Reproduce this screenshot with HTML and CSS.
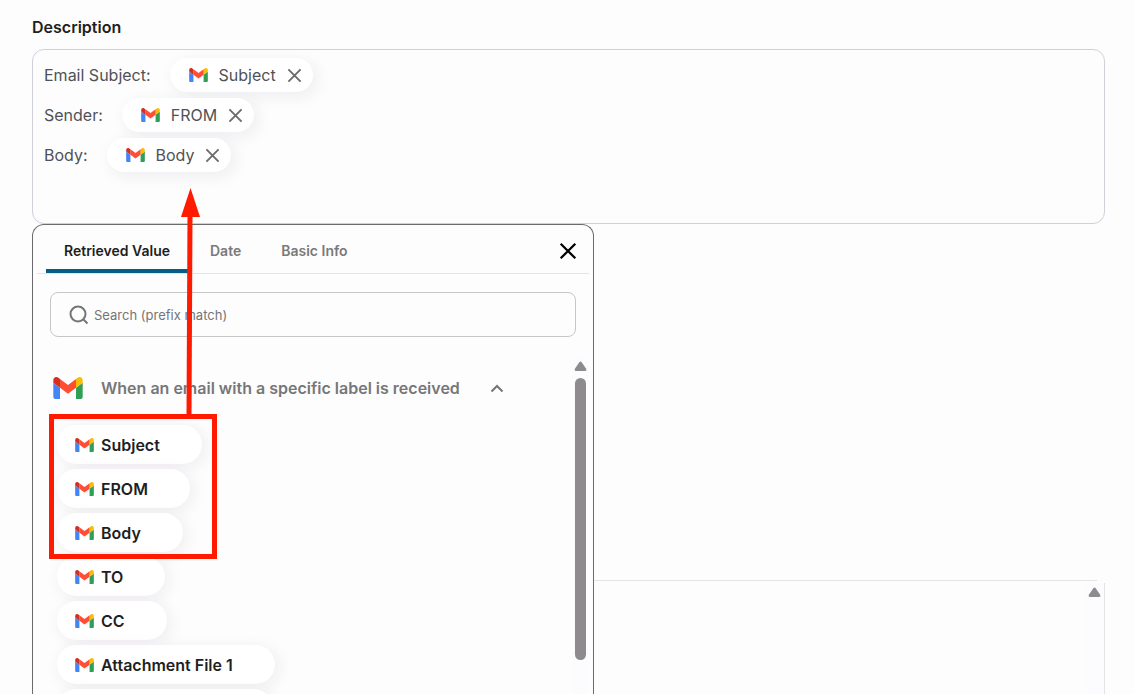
FILE: index.html
```html
<!DOCTYPE html>
<html lang="en">
<head>
  <meta charset="UTF-8" />
  <meta name="viewport" content="width=device-width, initial-scale=1.0"/>
  <title>Description</title>
  <link rel="stylesheet" href="styles.css">
</head>
<body>
  <!-- shared icons -->
  <svg class="sprite" aria-hidden="true">
    <symbol id="gmail" viewBox="52 42 88 66">
      <path fill="#4285f4" d="M58 108h14V74L52 59v43c0 3.32 2.69 6 6 6"/>
      <path fill="#2f9e57" d="M120 108h14c3.32 0 6-2.69 6-6V59l-20 15"/>
      <path fill="#fbbc04" d="M120 48v26l20-15v-8c0-7.42-8.47-11.65-14.4-7.2"/>
      <path fill="#ff4e33" d="M72 74V48l24 18 24-18v26L96 92"/>
      <path fill="#d5301f" d="M52 51v8l20 15V48l-5.6-4.2c-5.94-4.45-14.4-.22-14.4 7.2"/>
    </symbol>
    <symbol id="cross" viewBox="0 0 16 16">
      <path d="M1.5 1.5l13 13M14.5 1.5l-13 13" fill="none" stroke="currentColor"/>
    </symbol>
    <symbol id="up" viewBox="0 0 12 10">
      <path d="M5 1Q6 0 7 1L11.5 7.500Q12.500 10 10.500 10H1.500Q-.5 10 .5 7.500Z" fill="currentColor"/>
    </symbol>
  </svg>

  <main class="page">
    <h1 class="field-label" id="desc-label">Description</h1>

    <div class="field">
      <div class="editor" role="textbox" aria-multiline="true" aria-labelledby="desc-label" tabindex="0">
        <div class="line">
          <span>Email Subject:</span>
          <span class="token"><svg class="mail"><use href="#gmail"/></svg>Subject<button class="remove" type="button" aria-label="Remove Subject"><svg><use href="#cross"/></svg></button></span>
        </div>
        <div class="line">
          <span>Sender:</span>
          <span class="token"><svg class="mail"><use href="#gmail"/></svg>FROM<button class="remove" type="button" aria-label="Remove FROM"><svg><use href="#cross"/></svg></button></span>
        </div>
        <div class="line">
          <span>Body:</span>
          <span class="token"><svg class="mail"><use href="#gmail"/></svg>Body<button class="remove" type="button" aria-label="Remove Body"><svg><use href="#cross"/></svg></button></span>
        </div>
      </div>

      <div class="picker">
        <div class="picker-head">
          <div class="tabs" role="tablist">
            <button class="tab active" type="button" role="tab" aria-selected="true">Retrieved Value</button>
            <button class="tab" type="button" role="tab" aria-selected="false">Date</button>
            <button class="tab" type="button" role="tab" aria-selected="false">Basic Info</button>
          </div>
          <button class="close" type="button" aria-label="Close"><svg><use href="#cross"/></svg></button>
        </div>

        <div class="search">
          <svg viewBox="0 0 20 20"><circle cx="9" cy="9" r="7.500"/><path d="M14.500 14.500l4 4"/></svg>
          <input type="text" placeholder="Search (prefix match)" aria-label="Search">
        </div>

        <div class="picker-body">
          <div class="groups">
            <button class="group-title" type="button" aria-expanded="true">
              <svg class="mail-large"><use href="#gmail"/></svg>
              <span>When an email with a specific label is received</span>
              <svg class="chevron" viewBox="0 0 14 9"><path d="M1.500 7.500L7 2l5.500 5.500"/></svg>
            </button>
            <div class="values">
              <button class="value" type="button"><svg class="mail"><use href="#gmail"/></svg>Subject</button>
              <button class="value" type="button"><svg class="mail"><use href="#gmail"/></svg>FROM</button>
              <button class="value" type="button"><svg class="mail"><use href="#gmail"/></svg>Body</button>
              <button class="value" type="button"><svg class="mail"><use href="#gmail"/></svg>TO</button>
              <button class="value" type="button"><svg class="mail"><use href="#gmail"/></svg>CC</button>
              <button class="value" type="button"><svg class="mail"><use href="#gmail"/></svg>Attachment File 1</button>
              <button class="value next" type="button"><svg class="mail"><use href="#gmail"/></svg></button>
            </div>
          </div>
          <div class="scrollbar">
            <svg class="scroll-up"><use href="#up"/></svg>
            <div class="thumb"></div>
          </div>
        </div>
      </div>
    </div>

    <section class="results">
      <div class="scrollbar">
        <svg class="scroll-up"><use href="#up"/></svg>
      </div>
    </section>
  </main>

  <!-- red callout over the picker -->
  <svg class="callout" aria-hidden="true">
    <path d="M190.500 188L200 217H181Z" fill="#ff1a00"/>
    <path d="M190 215L189 416" stroke="#ff1a00" stroke-width="5"/>
    <rect x="51.500" y="416.500" width="163" height="140" fill="none" stroke="#ff1a00" stroke-width="5"/>
  </svg>
</body>
</html>
```
FILE: styles.css
```css
* {
  box-sizing: border-box;
}
body {
  margin: 0;
  height: 100vh;
  overflow: hidden;
  position: relative;
  background: #fdfdfd;
  color: #1f1f1f;
  font-family: Inter, "Liberation Sans", sans-serif;
  font-size: 16px;
}
button,
input {
  font: inherit;
  color: inherit;
  background: none;
  border: none;
  padding: 0;
}
button {
  cursor: pointer;
}
.sprite {
  display: none;
}
.page {
  height: 100%;
  display: flex;
  flex-direction: column;
  padding: 17px 30px 0 32px;
}
.field-label {
  margin: 0 0 12px;
  font-size: 16px;
  font-weight: 600;
  line-height: 20px;
}

/* Description editor */
.field {
  position: relative;
}
.editor {
  min-height: 175px;
  padding: 5px 11px;
  border: 1px solid #d0d0dc;
  border-radius: 12px;
  color: #4f5257;
  outline: none;
}
.line {
  display: flex;
  align-items: center;
  gap: 19px;
  height: 40px;
  line-height: 20px;
}
.token {
  display: flex;
  align-items: center;
  height: 34px;
  padding: 0 11px 0 19px;
  border-radius: 17px;
  background: #fff;
  box-shadow: 4px 4px 16px rgba(60, 40, 80, 0.08);
}
.mail {
  width: 19px;
  height: 14px;
  margin-right: 11px;
}
.remove {
  display: flex;
  margin-left: 11px;
  color: #6b6b6b;
}
.remove svg {
  width: 15px;
  height: 15px;
  stroke-width: 2;
}

/* Value picker */
.picker {
  position: absolute;
  top: 100%;
  left: 0;
  display: flex;
  flex-direction: column;
  width: 562px;
  max-width: 100%;
  height: calc(100vh - 224px);
  border: 1px solid #6c6a6e;
  border-bottom: none;
  border-radius: 12px 12px 0 0;
  background: #fdfdfd;
  z-index: 1;
}
.picker-head {
  display: flex;
  justify-content: space-between;
  margin: 0 4px;
  padding: 0 12px 0 9px;
  border-bottom: 1px solid #e2e4e6;
}
.tabs {
  display: flex;
  gap: 4px;
}
.tab {
  height: 48px;
  padding: 6px 18px 0;
  border-bottom: 4px solid transparent;
  border-radius: 3px 3px 0 0;
  font-size: 14px;
  font-weight: 600;
  color: #7a7a7a;
}
.tab.active {
  color: #1f1f1f;
  border-bottom-color: #075e85;
}
.close {
  display: flex;
  align-items: center;
  padding-top: 4px;
  color: #000;
}
.close svg {
  width: 18px;
  height: 18px;
  stroke-width: 2;
}
.search {
  display: flex;
  align-items: center;
  gap: 5px;
  height: 45px;
  margin: 18px 17px 20px;
  padding: 0 18px;
  border: 1px solid #c6c6c6;
  border-radius: 8px;
}
.search svg {
  width: 20px;
  height: 20px;
  fill: none;
  stroke: #757575;
  stroke-width: 2;
}
.search input {
  flex: 1;
  font-size: 13px;
  outline: none;
}
.search input::placeholder {
  color: #757575;
  opacity: 1;
}
.picker-body {
  flex: 1;
  display: flex;
  min-height: 0;
  overflow: hidden;
}
.groups {
  flex: 1;
  padding: 17px 0 0 20px;
}
.group-title {
  display: flex;
  align-items: center;
  height: 28px;
  font-weight: 600;
  color: #777;
}
.mail-large {
  width: 30px;
  height: 22px;
  margin-right: 18px;
}
.chevron {
  width: 14px;
  height: 9px;
  margin-left: 30px;
  fill: none;
  stroke: #757575;
  stroke-width: 2;
}
.values {
  display: flex;
  flex-direction: column;
  align-items: flex-start;
  gap: 5px;
  padding: 23px 0 0 4px;
}
.value {
  display: flex;
  align-items: center;
  height: 39px;
  padding: 0 42px 0 18px;
  border-radius: 20px;
  background: #fff;
  box-shadow: 3px 3px 16px rgba(60, 40, 80, 0.08);
  font-weight: 600;
}
.value .mail {
  margin-right: 7px;
}
.value.next {
  width: 216px;
}
.scrollbar {
  display: flex;
  flex-direction: column;
  align-items: center;
  gap: 7px;
  width: 16px;
  padding-top: 4px;
  background: #fcfbfd;
  color: #8e8b8f;
}
.picker-body .scrollbar {
  margin-right: 5px;
}
.scroll-up {
  width: 13px;
  height: 10px;
}
.thumb {
  width: 11px;
  height: 282px;
  border-radius: 6px;
  background: #8e8b8f;
}

/* Section under the editor */
.results {
  flex: 1;
  display: flex;
  flex-direction: column;
  margin-top: 356px;
}
.results::before {
  content: "";
  height: 1px;
  margin-right: 8px;
  background: #e2e4e6;
}
.results .scrollbar {
  flex: 1;
  align-self: flex-end;
  width: 19px;
  margin-top: 2px;
  padding-right: 2px;
  border-right: 1px solid #e2e4e6;
}

.callout {
  position: absolute;
  top: 0;
  left: 0;
  width: 220px;
  height: 562px;
  z-index: 2;
  pointer-events: none;
}
```
